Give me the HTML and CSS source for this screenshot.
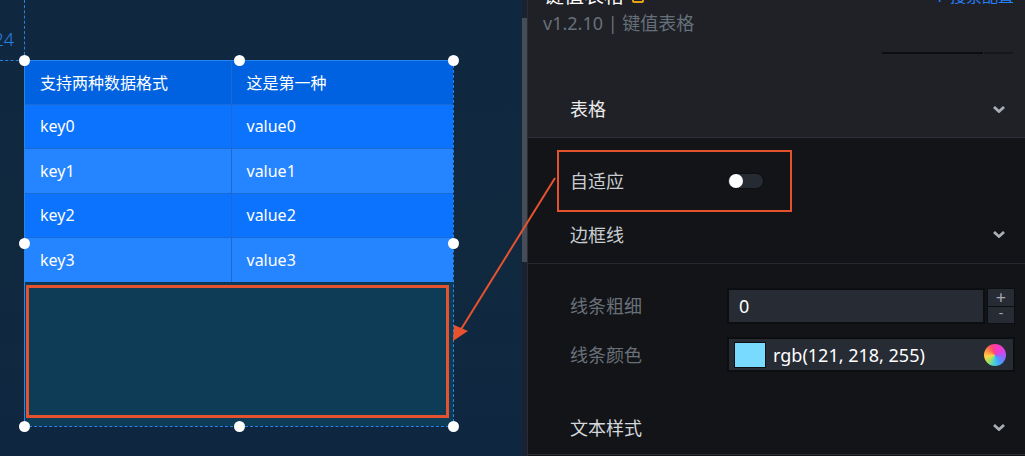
FILE: index.html
```html
<!DOCTYPE html>
<html lang="zh">
<head>
<meta charset="utf-8">
<title>键值表格</title>
<link rel="stylesheet" href="styles.css">
</head>
<body>
<div class="app">
  <div class="canvas">
    <div class="guide-v"></div>
    <div class="guide-h"></div>
    <div class="guide-label">24</div>
    <div class="widget">
      <table class="kv">
        <thead>
          <tr><th class="c1">支持两种数据格式</th><th>这是第一种</th></tr>
        </thead>
        <tbody>
          <tr class="r-a"><td class="c1">key0</td><td>value0</td></tr>
          <tr class="r-b"><td class="c1">key1</td><td>value1</td></tr>
          <tr class="r-a"><td class="c1">key2</td><td>value2</td></tr>
          <tr class="r-b"><td class="c1">key3</td><td>value3</td></tr>
        </tbody>
      </table>
      <div class="fill"><div class="annot"></div></div>
      <span class="handle h-tl"></span>
      <span class="handle h-tm"></span>
      <span class="handle h-tr"></span>
      <span class="handle h-ml"></span>
      <span class="handle h-mr"></span>
      <span class="handle h-bl"></span>
      <span class="handle h-bm"></span>
      <span class="handle h-br"></span>
    </div>
  </div>
  <div class="scrollbar"><div class="thumb"></div></div>
  <div class="panel">
    <div class="panel-head">
      <div class="title-row">
        <div class="title">键值表格<span class="badge"></span></div>
        <div class="search-link">⇡ 搜索配置</div>
      </div>
      <div class="version">v1.2.10 | 键值表格</div>
      <div class="tabs"><span class="tab t1"></span><span class="tab t2"></span></div>
      <div class="sec-row sec-first">
        <span class="sec-title">表格</span>
        <svg class="chev" viewBox="0 0 12 7" width="12" height="7"><path d="M1 1 L6 5.5 L11 1" /></svg>
      </div>
    </div>
    <div class="panel-body">
      <div class="autofit">
        <span class="label lab-light">自适应</span>
        <span class="toggle"><span class="knob"></span></span>
      </div>
      <div class="sec-row sec-border">
        <span class="sec-title lab-light">边框线</span>
        <svg class="chev" viewBox="0 0 12 7" width="12" height="7"><path d="M1 1 L6 5.5 L11 1" /></svg>
      </div>
      <div class="field f1">
        <span class="label lab-dim">线条粗细</span>
        <div class="num-input">
          <span class="num-val">0</span>
        </div>
        <div class="stepper">
          <span class="step">+</span>
          <span class="step minus">-</span>
        </div>
      </div>
      <div class="field f2">
        <span class="label lab-dim">线条颜色</span>
        <div class="color-input">
          <span class="swatch"></span>
          <span class="color-val">rgb(121, 218, 255)</span>
          <span class="wheel"></span>
        </div>
      </div>
      <div class="sec-row sec-text">
        <span class="sec-title lab-light2">文本样式</span>
        <svg class="chev" viewBox="0 0 12 7" width="12" height="7"><path d="M1 1 L6 5.5 L11 1" /></svg>
      </div>
    </div>
  </div>
  <svg class="arrow" width="1025" height="456" viewBox="0 0 1025 456">
    <line x1="555" y1="178" x2="460" y2="331" />
    <polygon points="453,341 454,325 468,331" />
  </svg>
</div>
</body>
</html>
```

FILE: styles.css
```css
* { box-sizing: border-box; }
html, body { margin: 0; padding: 0; }
body {
  width: 1025px;
  height: 456px;
  overflow: hidden;
  font-family: "Noto Sans", "Noto Sans CJK SC", sans-serif;
  background: #121417;
}
.app {
  position: relative;
  display: flex;
  width: 1025px;
  height: 456px;
  overflow: hidden;
}

/* ---------- canvas ---------- */
.canvas {
  position: relative;
  width: 522px;
  height: 456px;
  flex: none;
  overflow: hidden;
  background: linear-gradient(180deg, #10283f 0%, #10293f 60%, #0f2640 100%);
}
.guide-v {
  position: absolute;
  left: 24px;
  top: 0;
  height: 60px;
  border-left: 1px dashed #2b7fe0;
}
.guide-h {
  position: absolute;
  left: 0;
  top: 60px;
  width: 24px;
  border-top: 1px dashed #2b7fe0;
}
.guide-label {
  position: absolute;
  left: -10px;
  top: 27px;
  width: 24px;
  text-align: right;
  font-size: 18px;
  line-height: 24px;
  font-weight: 300;
  color: #2b7fe0;
}
.widget {
  position: absolute;
  left: 24px;
  top: 60px;
  width: 430px;
  height: 367px;
  display: flex;
  flex-direction: column;
  border: 1px dashed #2585f2;
  border-left-style: solid;
  border-top-style: solid;
}
.kv {
  width: 100%;
  border-collapse: collapse;
  table-layout: fixed;
  color: #ffffff;
  font-size: 16px;
}
.kv th, .kv td {
  text-align: left;
  font-weight: 400;
  padding: 0 0 0 15px;
  white-space: nowrap;
}
.kv .c1 { width: 206px; border-right: 1px solid #1b69d4; }
.kv thead tr { background: #0062e0; height: 43px; }
.kv tbody tr { height: 44.5px; border-top: 1px solid #1a6ad6; }
.kv .r-a { background: #0b73fe; }
.kv .r-b { background: #2584ff; }
.fill {
  flex: 1;
  background: #0e3c56;
  padding: 2px 4px 8px 1px;
  border-top: 1px solid #0c3550;
}
.annot {
  height: 100%;
  border: 3px solid #e5532e;
}
.handle {
  position: absolute;
  width: 11px;
  height: 11px;
  border-radius: 50%;
  background: #ffffff;
}
.h-tl { left: -6px; top: -6px; }
.h-tm { left: 209px; top: -6px; }
.h-tr { right: -6px; top: -6px; }
.h-ml { left: -6px; top: 177px; }
.h-mr { right: -6px; top: 177px; }
.h-bl { left: -6px; bottom: -6px; }
.h-bm { left: 209px; bottom: -6px; }
.h-br { right: -6px; bottom: -6px; }

/* ---------- scrollbar ---------- */
.scrollbar {
  width: 5px;
  flex: none;
  background: #1a2130;
  padding-top: 18px;
}
.thumb {
  height: 244px;
  background: #474d56;
}

/* ---------- panel ---------- */
.panel {
  width: 498px;
  flex: none;
  border-left: 1px solid #2a2d33;
  background: #121417;
  color: #c9cdd2;
}
.panel-head {
  display: flow-root;
  height: 138px;
  background: #1f2127;
  border-bottom: 1px solid #2c2f35;
}
.title-row {
  display: flex;
  justify-content: space-between;
  align-items: flex-end;
  margin-top: -14px;
  height: 20px;
  padding: 0 11px 0 16px;
}
.title {
  font-size: 20px;
  line-height: 20px;
  color: #ffffff;
  display: flex;
  align-items: center;
}
.badge {
  display: inline-block;
  width: 12px;
  height: 12px;
  margin-left: 8px;
  margin-top: 2px;
  border: 2px solid #e8a317;
  border-radius: 2px;
}
.search-link {
  font-size: 16px;
  line-height: 20px;
  color: #2681ff;
}
.version {
  margin-top: 5px;
  padding-left: 15px;
  font-size: 18px;
  line-height: 24px;
  color: #66707a;
}
.tabs {
  display: flex;
  gap: 1px;
  margin-top: 17px;
  margin-left: 354px;
  height: 2px;
}
.tab { display: block; height: 2px; background: #0b0d10; }
.t1 { width: 101px; }
.t2 { width: 29px; background: #14171b; }
.sec-row {
  display: flex;
  align-items: center;
  justify-content: space-between;
  padding: 0 20px 0 42px;
}
.sec-title { font-size: 18px; line-height: 24px; }
.sec-first { margin-top: 43px; height: 24px; color: #ececec; }
.chev { display: block; }
.chev path { fill: none; stroke: #a9aeb5; stroke-width: 2.8; stroke-linecap: butt; stroke-linejoin: miter; }

.panel-body { display: flex; flex-direction: column; }
.autofit {
  display: flex;
  align-items: center;
  margin: 12px 0 0 29px;
  width: 235px;
  height: 62px;
  border: 2px solid #e5532e;
  padding-left: 11px;
}
.label {
  width: 157px;
  flex: none;
  font-size: 18px;
  line-height: 24px;
}
.lab-light { color: #c9cdd2; }
.lab-light2 { color: #d5d8dc; }
.lab-dim { color: #6a7079; }
.toggle {
  position: relative;
  display: block;
  width: 37px;
  height: 16px;
  border-radius: 8px;
  background: #262b33;
  border: 1px solid #0d0f12;
}
.knob {
  position: absolute;
  left: 1px;
  top: 0;
  width: 14px;
  height: 14px;
  border-radius: 50%;
  background: #ffffff;
}
.sec-border {
  height: 52px;
  padding-bottom: 6px;
  border-bottom: 1px solid #25292f;
}
.field {
  display: flex;
  align-items: center;
  padding-left: 42px;
}
.f1 { margin-top: 24px; height: 36px; }
.f2 { margin-top: 13px; height: 35px; }
.num-input {
  width: 258px;
  height: 36px;
  background: #262b34;
  border: 2px solid #0c0e11;
  display: flex;
  align-items: center;
  padding-left: 10px;
}
.num-val { font-size: 18px; color: #ffffff; line-height: 24px; }
.stepper {
  margin-left: 2px;
  width: 28px;
  height: 36px;
  display: flex;
  flex-direction: column;
  gap: 1px;
  background: #0c0e11;
  padding: 1px;
}
.step {
  flex: 1;
  background: #262b34;
  color: #a3a8af;
  font-size: 18px;
  line-height: 16px;
  text-align: center;
}
.step.minus { font-size: 14px; line-height: 12px; }
.color-input {
  width: 288px;
  height: 35px;
  background: #262b34;
  border: 2px solid #0c0e11;
  display: flex;
  align-items: center;
  padding-left: 5px;
}
.swatch {
  width: 32px;
  height: 26px;
  background: rgb(121, 218, 255);
  border: 1px solid #0c0e11;
  flex: none;
}
.color-val {
  margin-left: 7px;
  font-size: 18px;
  line-height: 24px;
  color: #ffffff;
  flex: 1;
}
.wheel {
  width: 22px;
  height: 22px;
  border-radius: 50%;
  margin-right: 7px;
  background: conic-gradient(from 0deg, #ff3aa8, #e23fe0 60deg, #8a6cff 110deg, #3fa6ff 150deg, #4cd3d0 190deg, #a8e05a 225deg, #ffd24a 260deg, #ff8a45 300deg, #ff4d6a 335deg, #ff3aa8);
}
.sec-text {
  margin-top: 33px;
  height: 50px;
  padding-bottom: 4px;
  border-bottom: 1px solid #2a2d33;
}

/* ---------- annotation arrow ---------- */
.arrow {
  position: absolute;
  left: 0;
  top: 0;
  pointer-events: none;
}
.arrow line { stroke: #e8532f; stroke-width: 2; }
.arrow polygon { fill: #e8532f; }
```
